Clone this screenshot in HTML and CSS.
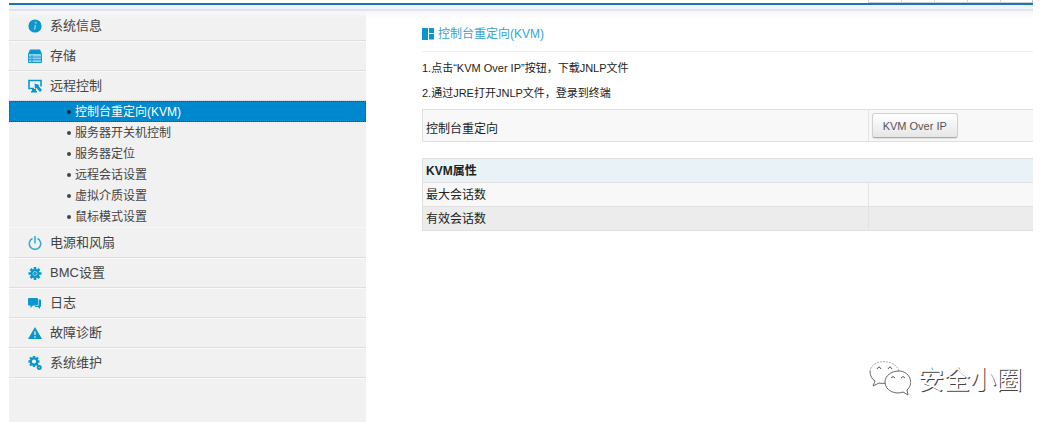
FILE: index.html
```html
<!DOCTYPE html>
<html lang="zh-CN">
<head>
<meta charset="utf-8">
<title>控制台重定向(KVM)</title>
<link rel="stylesheet" href="styles.css">
</head>
<body>
<div class="page">
  <header class="topbar">
    <div class="tabs"><span></span><span></span><span></span><span></span><span></span></div>
    <div class="rule"></div>
  </header>
  <div class="columns">
    <nav class="sidebar">
      <ul class="menu">
        <li><a class="item" href="#"><svg class="icon" viewBox="0 0 14 14"><circle cx="7" cy="7" r="6.6"/><circle cx="7.700" cy="3.700" r="1" fill="#8fcfe9"/><path d="M7.500 6 6.500 10.500" stroke="#8fcfe9" stroke-width="1.400"/></svg>系统信息</a></li>
        <li><a class="item" href="#"><svg class="icon" viewBox="0 0 14 14"><path d="M2 .5h10l2 4.500H0z"/><path d="M0 5h14v9H0z" fill="#8fd2ec"/><path d="M.5 5v8.500h13V5M1 8h12M1 10.700h12M4 6v7" fill="none" stroke="#159ccf"/></svg>存储</a></li>
        <li><a class="item" href="#"><svg class="icon" viewBox="0 0 14 14"><path d="M6 9.500H1v-8h12v6" fill="none" stroke="#0a97cd" stroke-width="1.600"/><path d="M4 10h4v2h1v1.500H3V12h1zM6.500 4.500l5 1.500-1 1 3.500 4-2 2-3.500-4L7 10z"/></svg>远程控制</a>
          <ul class="submenu">
            <li><a class="sub active" href="#">控制台重定向(KVM)</a></li>
            <li><a class="sub" href="#">服务器开关机控制</a></li>
            <li><a class="sub" href="#">服务器定位</a></li>
            <li><a class="sub" href="#">远程会话设置</a></li>
            <li><a class="sub" href="#">虚拟介质设置</a></li>
            <li><a class="sub" href="#">鼠标模式设置</a></li>
          </ul>
        </li>
        <li><a class="item" href="#"><svg class="icon" viewBox="0 0 14 14"><path d="M4.500 2.500a5.700 5.700 0 1 0 5 0M7 0v7.500" fill="none" stroke="#30a8d5" stroke-width="1.500"/></svg>电源和风扇</a></li>
        <li><a class="item" href="#"><svg class="icon" viewBox="0 0 14 14"><circle cx="7" cy="7.500" r="4.600"/><path d="M7 1v13M.5 7.500h13M2.500 3l9 9M11.500 3l-9 9" stroke="#0a97cd" stroke-width="2.600"/><circle cx="7" cy="7.500" r="2" fill="#0a97cd" stroke="#8fd1ea"/></svg>BMC设置</a></li>
        <li><a class="item" href="#"><svg class="icon" viewBox="0 0 14 14"><path d="M1 2h8q1 0 1 1v5.500q0 1-1 1H5L2.500 12V9.500H1q-1 0-1-1V3q0-1 1-1z"/><path d="M10.600 3.500H12q1 0 1 1V10q0 1-1 1v2l-2-2H6.500l1-1h2.100q1 0 1-1z"/></svg>日志</a></li>
        <li><a class="item" href="#"><svg class="icon" viewBox="0 0 14 14"><path d="M7 1 14 13H0z"/><path d="M7 5.500v3.500M7 10.200v1.500" stroke="#c7e7f4" stroke-width="1.500"/></svg>故障诊断</a></li>
        <li><a class="item" href="#"><svg class="icon" viewBox="0 0 14 14"><path d="M6 0v11M.5 5.500h11M2 1.500l8 8M10 1.500l-8 8" stroke="#0a97cd" stroke-width="2.400"/><circle cx="6" cy="5.500" r="3.200" fill="#f1f1f1" stroke="#0a97cd" stroke-width="2.200"/><circle cx="11.300" cy="11.500" r="1.700" fill="#6fc3e3" stroke="#0a97cd" stroke-width="1.700"/></svg>系统维护</a></li>
      </ul>
    </nav>
    <main class="content">
      <h1 class="title"><svg class="title-icon" viewBox="0 0 12 12"><path d="M0 0h6v12H0zM7 0h5v5H7zM7 6h5v5.500H7z"/></svg>控制台重定向(KVM)</h1>
      <p class="step">1.点击“KVM Over IP”按钮，下载JNLP文件</p>
      <p class="step">2.通过JRE打开JNLP文件，登录到终端</p>
      <table class="grid launch">
        <tbody><tr><td class="name">控制台重定向</td><td><button class="button" type="button">KVM Over IP</button></td></tr></tbody>
      </table>
      <table class="grid props">
        <thead><tr><th colspan="2">KVM属性</th></tr></thead>
        <tbody>
          <tr><td class="name">最大会话数</td><td></td></tr>
          <tr class="alt"><td class="name">有效会话数</td><td></td></tr>
        </tbody>
      </table>
    </main>
  </div>
</div>
<div class="watermark">
  <svg class="bubbles" viewBox="0 0 42 36"><g fill="#fff" stroke-width="1"><path stroke="#aaa" stroke-dasharray="2 1" d="M30 11C27-1 3-2 1 11"/><path stroke="#666" d="M1 11c0 5 2 8 5 10l-2 5 6-3q4 1 7 0"/><path stroke="#666" d="M30 11c-8 0-14 5-14 11 0 9 11 13 18 10l5 3-1-5c8-7 2-19-8-19z"/></g><path d="M8 9q2-4 4 0M19 9q2-4 4 0M22 18q2-3 4 0M32 18q2-3 4 0" fill="none" stroke="#555"/></svg>
  <span>安全小圈</span>
</div>
</body>
</html>
```
FILE: styles.css
```css
* { box-sizing: border-box; }
body {
  margin: 0;
  background: #fff;
  color: #222;
  font: 12px/20px "Liberation Sans", "Noto Sans CJK SC", sans-serif;
}
ul { list-style: none; margin: 0; padding: 0; }
a { color: inherit; text-decoration: none; }
.page {
  display: flex;
  flex-direction: column;
  min-height: 100vh;
  padding: 0 24px 4px 9px;
}
.tabs {
  display: flex;
  justify-content: flex-end;
  height: 3px;
}
.tabs span {
  width: 33px;
  border-left: 1px solid #d5d8dc;
  border-bottom: 1px solid #d0d0d0;
}
.tabs span:last-child { border-right: 1px solid #c0c5ca; }
.rule {
  height: 8px;
  border-top: 2px solid #1a75b7;
  border-bottom: 2px solid #e1e4ea;
  background: #f0f4fa;
}
.columns {
  display: flex;
  flex: 1;
  background: linear-gradient(#f7f7f7, #fff 8px);
}
.sidebar {
  flex: 0 0 357px;
  background: linear-gradient(#f8f8f8, #f1f1f1 8px);
}
.item {
  display: flex;
  align-items: center;
  gap: 8px;
  height: 30px;
  padding-left: 19px;
  border-bottom: 1px solid #dedede;
  box-shadow: 0 1px #f9f9f9;
  color: #444;
  font-size: 13px;
}
.icon { width: 14px; height: 14px; fill: #0a97cd; }
.submenu { border-bottom: 1px solid #f7f7f7; }
.sub {
  display: flex;
  align-items: center;
  gap: 4px;
  height: 21px;
  padding-left: 58px;
  color: #444;
}
.sub::before {
  content: "";
  width: 4px;
  height: 4px;
  border-radius: 50%;
  background: #444;
}
.active {
  padding-left: 57px;
  border: 1px dotted #21536f;
  background: #0088ce;
  color: #fff;
}
.active::before { background: #123; }
.content { flex: 1; padding: 13px 0 0 56px; }
.title {
  display: flex;
  align-items: center;
  gap: 4px;
  height: 28px;
  margin: 0 0 4px;
  padding-bottom: 8px;
  border-bottom: 1px solid #eee;
  color: #32a5d3;
  font-size: 12px;
  font-weight: 400;
}
.title-icon { width: 12px; height: 12px; fill: #0a97cd; }
.step { margin: 0; font-size: 11px; line-height: 25px; }
.grid {
  width: 100%;
  border-collapse: collapse;
  table-layout: fixed;
  border: 1px solid #e0e0e0;
  border-right: 0;
}
.grid td, .grid th {
  height: 24px;
  padding: 0 3px;
  border-bottom: 1px solid #e0e0e0;
  text-align: left;
}
.grid td { background: #f8f8f8; }
.grid .name { width: 73%; border-right: 1px solid #e3e3e3; }
.grid th { background: #e9f2f6; }
.grid .alt td { background: #ececec; }
.launch { margin: 3px 0 16px; }
.launch td { height: 32px; }
.launch .name { padding-top: 6px; }
.props th { width: 100%; }
.props { table-layout: auto; }
.button {
  display: block;
  height: 25px;
  padding: 0 10px;
  border: 1px solid #d0d0d0;
  border-bottom-color: #aaa;
  border-radius: 3px;
  background: linear-gradient(#fff, #e6e6e6);
  box-shadow: 0 1px 1px #ddd;
  color: #555;
  font: inherit;
  font-size: 11px;
}
.watermark {
  position: absolute;
  right: 35px;
  bottom: 30px;
  display: flex;
  align-items: center;
  gap: 7px;
  color: #fff;
  font: 400 26px/36px "Noto Sans CJK SC", sans-serif;
  text-shadow: 1px 1px 0 #444;
}
.bubbles { width: 42px; height: 36px; }
```
